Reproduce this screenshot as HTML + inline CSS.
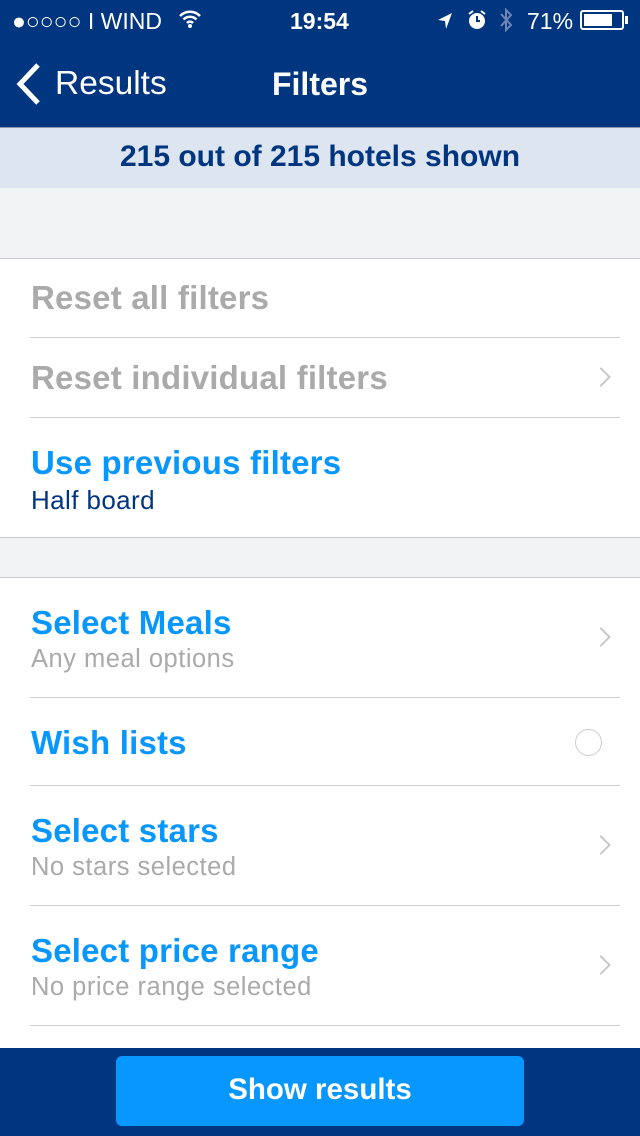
<!DOCTYPE html>
<html><head><meta charset="utf-8"><style>
*{margin:0;padding:0;box-sizing:border-box}
body{width:640px;height:1136px;overflow:hidden;font-family:"Liberation Sans",Arial,sans-serif;background:#fff;position:relative}
.abs{position:absolute}
.nav{left:0;top:0;width:640px;height:128px;background:#003580;color:#fff}
.t{position:absolute;white-space:nowrap}
.line{position:absolute;left:30px;right:20px;height:1px;background:#cfcfcf}
.full{position:absolute;left:0;right:0;height:1px;background:#c8c8cc}
.h{font-size:33px;color:#0896ff;font-weight:bold;letter-spacing:0.2px}
.g{font-size:33px;color:#aaa;font-weight:bold;letter-spacing:0.2px}
.s{font-size:25.5px;color:#aaa;letter-spacing:.5px}
.chev{position:absolute;right:32px;width:14px;height:14px;border-right:2.5px solid #c7c7cc;border-top:2.5px solid #c7c7cc;transform:rotate(45deg)}
</style></head><body>
<div class="abs nav">
 <div class="t" style="left:12px;top:8px;font-size:23px">●○○○○ I WIND</div>
 <svg class="abs" style="left:178px;top:9px" width="24" height="20" viewBox="0 0 24 20"><path d="M2 7a14 14 0 0 1 20 0M5.5 10.5a9 9 0 0 1 13 0M9 14a4 4 0 0 1 6 0" stroke="#fff" stroke-width="2.5" fill="none"/><circle cx="12" cy="17" r="2" fill="#fff"/></svg>
 <div class="t" style="left:290px;top:8px;font-size:23px;font-weight:bold">19:54</div>
 <svg class="abs" style="left:436px;top:11px" width="18" height="20"><path d="M16 2 L2 9 L9 10 L10 18 Z" fill="#fff"/></svg>
 <svg class="abs" style="left:466px;top:9px" width="22" height="22"><circle cx="11" cy="12" r="8" fill="#fff"/><path d="M11 7v5h3" stroke="#003580" stroke-width="2" fill="none"/><path d="M3 5l4-3M19 5l-4-3" stroke="#fff" stroke-width="2"/></svg>
 <svg class="abs" style="left:498px;top:7px" width="16" height="26"><path d="M3 7l10 11-5 5V3l5 5L3 19" stroke="#6f86b5" stroke-width="2" fill="none"/></svg>
 <div class="t" style="left:527px;top:8px;font-size:23px">71%</div>
 <div class="abs" style="left:580px;top:10px;width:44px;height:20px;border:2px solid #fff;border-radius:3px"><div style="margin:2px;width:28px;height:12px;background:#fff"></div></div>
 <div class="abs" style="left:625px;top:16px;width:3px;height:8px;background:#fff"></div>
 <svg class="abs" style="left:14px;top:62px" width="30" height="44"><path d="M24 3 L6 22 L24 41" stroke="#fff" stroke-width="5" fill="none"/></svg>
 <div class="t" style="left:55px;top:65px;font-size:33.5px">Results</div>
 <div class="t" style="left:0;width:640px;text-align:center;top:66px;font-size:32px;font-weight:bold">Filters</div>
</div>
<div class="abs" style="left:0;top:127px;width:640px;height:1px;background:#8895ab"></div>
<div class="abs" style="left:0;top:128px;width:640px;height:60px;background:#dde5f0"></div>
<div class="t" style="left:0;width:640px;text-align:center;top:140px;font-size:30px;font-weight:bold;color:#003580">215 out of 215 hotels shown</div>
<div class="abs" style="left:0;top:188px;width:640px;height:70px;background:#f2f3f5"></div>
<div class="full" style="top:258px"></div>
<div class="t g" style="left:31px;top:279px">Reset all filters</div>
<div class="line" style="top:337px"></div>
<div class="t g" style="left:31px;top:359px">Reset individual filters</div>
<div class="chev" style="top:370px"></div>
<div class="line" style="top:417px"></div>
<div class="t h" style="left:31px;top:444px">Use previous filters</div>
<div class="t" style="left:31px;top:485px;font-size:26px;color:#003580;letter-spacing:.4px">Half board</div>
<div class="abs" style="left:0;top:537px;width:640px;height:41px;background:#f2f3f5;border-top:1px solid #c8c8cc;border-bottom:1px solid #c8c8cc"></div>
<div class="t h" style="left:31px;top:604px">Select Meals</div>
<div class="t s" style="left:31px;top:645px">Any meal options</div>
<div class="chev" style="top:630px"></div>
<div class="line" style="top:697px"></div>
<div class="t h" style="left:31px;top:724px">Wish lists</div>
<div class="abs" style="left:575px;top:729px;width:27px;height:27px;border:1.5px solid #ccc;border-radius:50%"></div>
<div class="line" style="top:785px"></div>
<div class="t h" style="left:31px;top:812px">Select stars</div>
<div class="t s" style="left:31px;top:853px">No stars selected</div>
<div class="chev" style="top:838px"></div>
<div class="line" style="top:905px"></div>
<div class="t h" style="left:31px;top:932px">Select price range</div>
<div class="t s" style="left:31px;top:973px">No price range selected</div>
<div class="chev" style="top:958px"></div>
<div class="line" style="top:1025px"></div>
<div class="abs" style="left:0;top:1048px;width:640px;height:88px;background:#003580"></div>
<div class="abs" style="left:116px;top:1056px;width:408px;height:70px;background:#0896ff;border-radius:6px"></div>
<div class="t" style="left:116px;width:408px;text-align:center;top:1073px;font-size:29.5px;font-weight:bold;color:#fff">Show results</div>
</body></html>
